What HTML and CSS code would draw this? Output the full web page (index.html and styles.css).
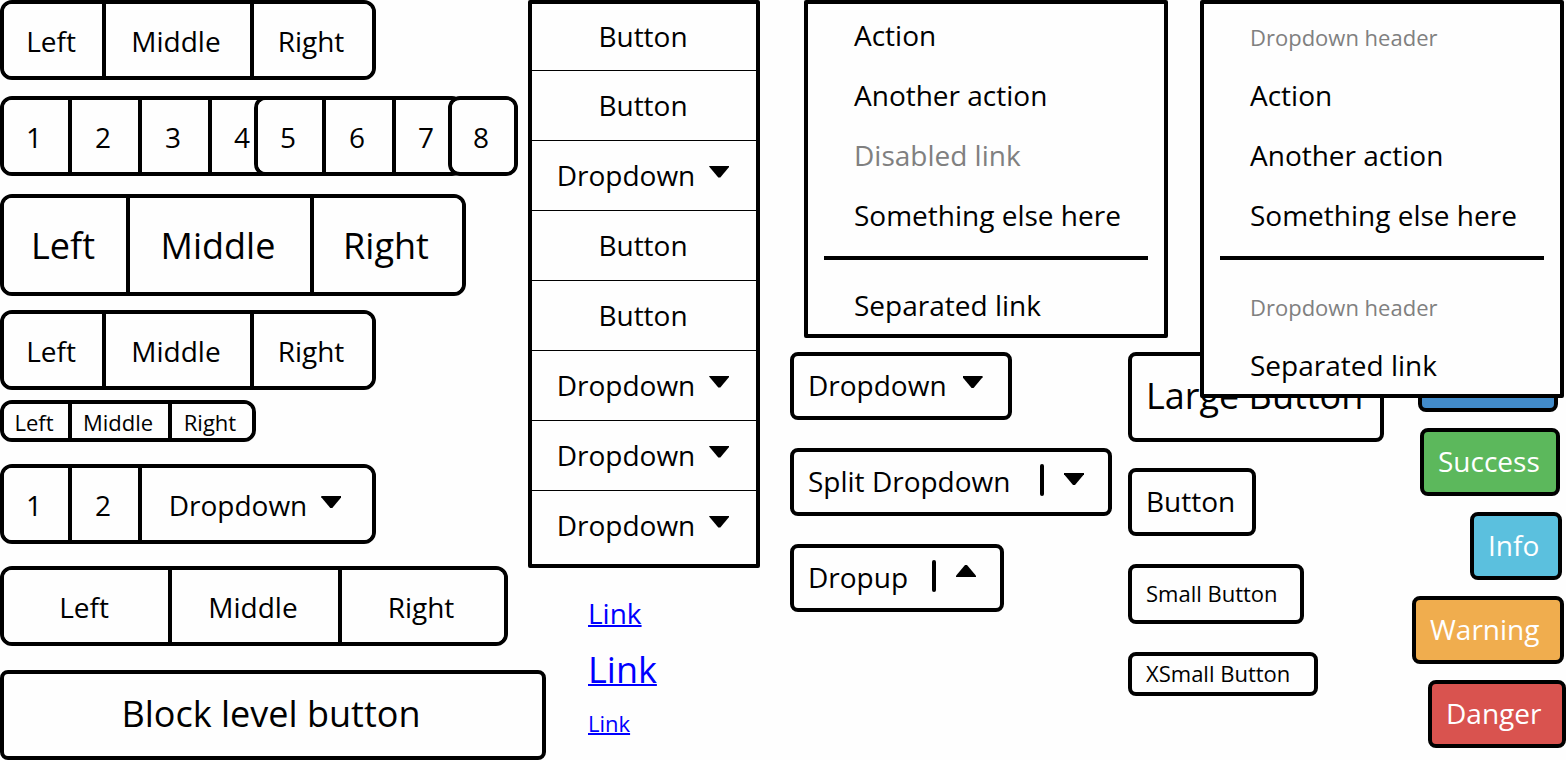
FILE: index.html
```html
<!DOCTYPE html>
<html lang="en">
<head>
<meta charset="utf-8">
<title>Buttons</title>
<link rel="stylesheet" href="styles.css">
</head>
<body>
<main class="sheet">
  <section class="groups" aria-label="Button groups">
    <div class="group group--words" role="group">
      <button class="cell">Left</button><button class="cell">Middle</button><button class="cell">Right</button>
    </div>
    <div class="toolbar" role="toolbar">
      <div class="group group--four" role="group">
        <button class="cell">1</button><button class="cell">2</button><button class="cell">3</button><button class="cell">4</button>
      </div>
      <div class="group group--three" role="group">
        <button class="cell">5</button><button class="cell">6</button><button class="cell">7</button>
      </div>
      <div class="group group--one" role="group">
        <button class="cell">8</button>
      </div>
    </div>
    <div class="group group--large" role="group">
      <button class="cell">Left</button><button class="cell">Middle</button><button class="cell">Right</button>
    </div>
    <div class="group group--words" role="group">
      <button class="cell">Left</button><button class="cell">Middle</button><button class="cell">Right</button>
    </div>
    <div class="group group--small" role="group">
      <button class="cell">Left</button><button class="cell">Middle</button><button class="cell">Right</button>
    </div>
    <div class="group group--nested" role="group">
      <button class="cell">1</button><button class="cell">2</button><button class="cell">Dropdown <span class="caret"></span></button>
    </div>
    <div class="group group--justified" role="group">
      <button class="cell">Left</button><button class="cell">Middle</button><button class="cell">Right</button>
    </div>
    <button class="btn btn--block">Block level button</button>
  </section>

  <section class="stack-column" aria-label="Vertical group and links">
    <div class="stack" role="group">
      <button class="stack__item">Button</button>
      <button class="stack__item">Button</button>
      <button class="stack__item">Dropdown <span class="caret"></span></button>
      <button class="stack__item">Button</button>
      <button class="stack__item">Button</button>
      <button class="stack__item">Dropdown <span class="caret"></span></button>
      <button class="stack__item">Dropdown <span class="caret"></span></button>
      <button class="stack__item stack__item--last">Dropdown <span class="caret"></span></button>
    </div>
    <nav class="links">
      <a class="link" href="#">Link</a>
      <a class="link link--large" href="#">Link</a>
      <a class="link link--small" href="#">Link</a>
    </nav>
  </section>

  <section class="right" aria-label="Menus and buttons">
    <ul class="menu">
      <li><a class="menu__item" href="#">Action</a></li>
      <li><a class="menu__item" href="#">Another action</a></li>
      <li><a class="menu__item menu__item--disabled" href="#" aria-disabled="true">Disabled link</a></li>
      <li><a class="menu__item" href="#">Something else here</a></li>
      <li class="menu__divider" role="separator"></li>
      <li><a class="menu__item" href="#">Separated link</a></li>
    </ul>
    <ul class="menu menu--over">
      <li class="menu__header">Dropdown header</li>
      <li><a class="menu__item" href="#">Action</a></li>
      <li><a class="menu__item" href="#">Another action</a></li>
      <li><a class="menu__item" href="#">Something else here</a></li>
      <li class="menu__divider" role="separator"></li>
      <li class="menu__header">Dropdown header</li>
      <li><a class="menu__item" href="#">Separated link</a></li>
    </ul>
    <div class="buttons">
      <div class="column">
        <button class="btn btn--dropdown">Dropdown <span class="caret"></span></button>
        <div class="split split--down">
          <button class="split__label">Split Dropdown</button>
          <button class="split__toggle" aria-label="Open menu"><span class="caret"></span></button>
        </div>
        <div class="split split--up">
          <button class="split__label">Dropup</button>
          <button class="split__toggle" aria-label="Open menu"><span class="caret caret--up"></span></button>
        </div>
      </div>
      <div class="column">
        <button class="btn btn--large">Large Button</button>
        <button class="btn btn--plain">Button</button>
        <button class="btn btn--small">Small Button</button>
        <button class="btn btn--xsmall">XSmall Button</button>
      </div>
      <div class="column column--colors">
        <button class="btn btn--primary">Primary</button>
        <button class="btn btn--success">Success</button>
        <button class="btn btn--info">Info</button>
        <button class="btn btn--warning">Warning</button>
        <button class="btn btn--danger">Danger</button>
      </div>
    </div>
  </section>
</main>
</body>
</html>
```
FILE: styles.css
```css
:root {
  --line: 4px;
  --text: 28px;
  --text-large: 36px;
  --text-small: 22px;
}

* {
  box-sizing: border-box;
}

body {
  margin: 0;
  background: #fefefe;
  color: #000;
  font: 400 var(--text)/40px "Open Sans", "Noto Sans", sans-serif;
}

button {
  margin: 0;
  padding: 0;
  border: 0;
  background: #fefefe;
  color: inherit;
  font: inherit;
  white-space: nowrap;
}

.sheet {
  display: flex;
  align-items: flex-start;
}

/* Button groups */
.groups {
  flex: none;
  width: 528px;
  display: flex;
  flex-direction: column;
  align-items: flex-start;
}

.group {
  display: grid;
  height: 80px;
  border: var(--line) solid #000;
  border-radius: 12px;
  background: #fefefe;
  overflow: hidden;
}

.cell + .cell {
  border-left: var(--line) solid #000;
}

.cell,
.stack__item {
  display: flex;
  align-items: center;
  justify-content: center;
  gap: 14px;
}

.cell {
  padding: 2px 4px 0 0;
}

.stack__item {
  padding: 0 2px 2px 0;
}

.group--words {
  grid-template-columns: 98px 148px 122px;
}

.toolbar {
  display: flex;
  margin: 16px 0 18px;
}

.group--four {
  grid-template-columns: 64px 70px 70px 68px;
}

.group--three {
  grid-template-columns: 64px 70px 68px;
  margin-left: -26px;
}

.group--one {
  grid-template-columns: 62px;
  margin-left: -16px;
}

.group--large {
  grid-template-columns: 122px 184px 152px;
  height: 102px;
  margin-bottom: 14px;
  font-size: var(--text-large);
}

.group--small {
  grid-template-columns: 64px 100px 84px;
  height: 42px;
  margin: 10px 0 22px;
  font-size: var(--text-small);
  line-height: 32px;
}

.group--nested {
  grid-template-columns: 64px 70px 234px;
}

.group--justified {
  grid-template-columns: 164px 170px 166px;
  margin: 22px 0 24px;
}

/* Carets */
.caret {
  width: 20px;
  height: 12px;
  margin-bottom: 6px;
  background: #000;
  clip-path: polygon(0 0, 100% 0, 100% 10%, 55% 100%, 45% 100%, 0 10%);
}

.caret--up {
  margin-bottom: 14px;
  clip-path: polygon(45% 0, 55% 0, 100% 90%, 100% 100%, 0 100%, 0 90%);
}

/* Vertical group */
.stack-column {
  flex: none;
  width: 232px;
  margin-right: 30px;
}

.stack {
  display: flex;
  flex-direction: column;
  border: var(--line) solid #000;
  border-radius: 2px;
}

.stack__item {
  height: 66px;
}

.stack__item + .stack__item {
  height: 70px;
  border-top: 1px solid #000;
}

.stack .stack__item--last {
  height: 74px;
  padding-bottom: 6px;
}

.links {
  display: flex;
  flex-direction: column;
  align-items: flex-start;
  padding: 25px 0 0 60px;
}

.link {
  color: #00f;
  text-decoration-thickness: 2px;
}

.link--large {
  padding: 12px 0;
  font-size: var(--text-large);
  line-height: 50px;
}

.link--small {
  font-size: var(--text-small);
  line-height: 32px;
}

/* Menus */
.right {
  position: relative;
  flex: 1;
  min-width: 0;
}

.menu {
  display: flex;
  flex-direction: column;
  gap: 4px;
  width: 364px;
  margin: 0 0 14px 14px;
  padding: 4px 0 0;
  border: var(--line) solid #000;
  border-radius: 2px;
  background: #fefefe;
  list-style: none;
}

.menu--over {
  position: absolute;
  top: 0;
  right: 2px;
  z-index: 1;
  margin: 0;
}

.menu__item,
.menu__header {
  display: block;
  padding: 0 46px 2px;
  line-height: 54px;
  color: #000;
  text-decoration: none;
  white-space: nowrap;
}

.menu__item--disabled,
.menu__header {
  color: #808080;
}

.menu__header {
  padding: 2px 46px 0;
  font-size: var(--text-small);
}

.menu__divider {
  height: 4px;
  margin: 8px 16px 14px;
  background: #000;
}

/* Single buttons */
.buttons {
  display: grid;
  grid-template-columns: 338px auto 1fr;
  align-items: start;
}

.column {
  display: flex;
  flex-direction: column;
  align-items: flex-start;
  gap: 28px;
}

.btn,
.split {
  display: flex;
  align-items: center;
  height: 68px;
  border: var(--line) solid #000;
  border-radius: 8px;
  background: #fefefe;
}

.btn {
  gap: 16px;
  padding: 0 14px 2px;
}

.btn--block {
  justify-content: center;
  width: 546px;
  height: 90px;
  padding-right: 18px;
  font-size: var(--text-large);
}

.btn--dropdown {
  width: 222px;
}

.split {
  justify-content: space-between;
  padding: 0 24px 0 14px;
}

.split__label {
  padding-bottom: 2px;
}

.split--down {
  width: 322px;
}

.split--up {
  width: 214px;
}

.split__toggle {
  display: flex;
  align-items: center;
  gap: 20px;
}

.split__toggle::before {
  content: "";
  width: 4px;
  height: 32px;
  margin-bottom: 4px;
  border-radius: 2px;
  background: #000;
}

.btn--large {
  width: 256px;
  height: 90px;
  margin-bottom: -2px;
  font-size: var(--text-large);
}

.btn--plain {
  width: 128px;
}

.btn--small {
  width: 176px;
  height: 60px;
  font-size: var(--text-small);
}

.btn--xsmall {
  width: 190px;
  height: 44px;
  font-size: var(--text-small);
  line-height: 32px;
}

.column--colors {
  align-items: flex-end;
  gap: 16px;
  margin-top: -8px;
  color: #fff;
}

.btn--primary {
  width: 140px;
  margin-right: 8px;
  background: #428bca;
}

.btn--success {
  width: 140px;
  margin-right: 6px;
  background: #5cb85c;
}

.btn--info {
  width: 92px;
  margin-right: 4px;
  background: #5bc0de;
}

.btn--warning {
  width: 152px;
  margin-right: 2px;
  background: #f0ad4e;
}

.btn--danger {
  width: 138px;
  background: #d9534f;
}
```
